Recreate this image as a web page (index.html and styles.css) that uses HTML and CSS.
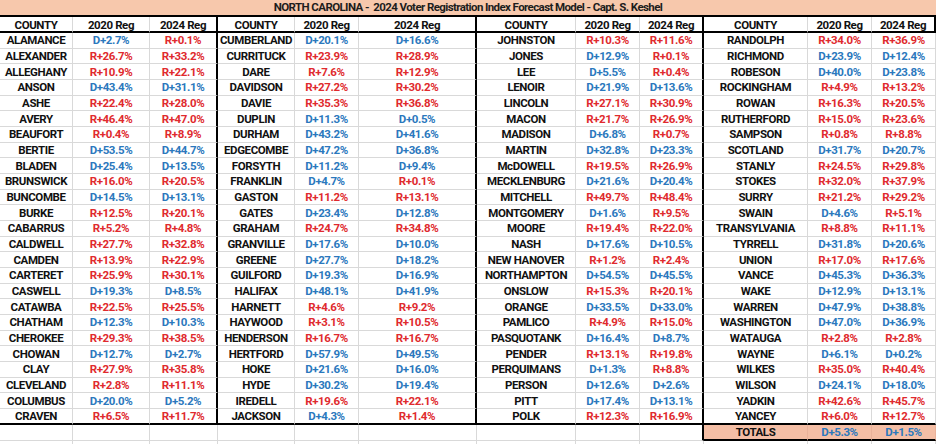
FILE: index.html
```html
<!DOCTYPE html>
<html lang="en">
<head>
<meta charset="utf-8">
<title>NC 2024 Voter Registration Index Forecast Model</title>
<link rel="stylesheet" href="styles.css">
</head>
<body>
<div class="sheet">
  <div class="title">NORTH CAROLINA -&nbsp; 2024 Voter Registration Index Forecast Model - Capt. S. Keshel</div>
  <div class="grid head">
    <div>COUNTY</div><div>2020 Reg</div><div>2024 Reg</div>
    <div>COUNTY</div><div>2020 Reg</div><div>2024 Reg</div>
    <div>COUNTY</div><div>2020 Reg</div><div>2024 Reg</div>
    <div>COUNTY</div><div>2020 Reg</div><div>2024 Reg</div>
  </div>
  <div class="grid body">
    <div class="n">ALAMANCE</div><div class="d">D+2.7%</div><div class="r">R+0.1%</div>
    <div class="n">CUMBERLAND</div><div class="d">D+20.1%</div><div class="d">D+16.6%</div>
    <div class="n">JOHNSTON</div><div class="r">R+10.3%</div><div class="r">R+11.6%</div>
    <div class="n">RANDOLPH</div><div class="r">R+34.0%</div><div class="r">R+36.9%</div>

    <div class="n">ALEXANDER</div><div class="r">R+26.7%</div><div class="r">R+33.2%</div>
    <div class="n">CURRITUCK</div><div class="r">R+23.9%</div><div class="r">R+28.9%</div>
    <div class="n">JONES</div><div class="d">D+12.9%</div><div class="r">R+0.1%</div>
    <div class="n">RICHMOND</div><div class="d">D+23.9%</div><div class="d">D+12.4%</div>

    <div class="n">ALLEGHANY</div><div class="r">R+10.9%</div><div class="r">R+22.1%</div>
    <div class="n">DARE</div><div class="r">R+7.6%</div><div class="r">R+12.9%</div>
    <div class="n">LEE</div><div class="d">D+5.5%</div><div class="r">R+0.4%</div>
    <div class="n">ROBESON</div><div class="d">D+40.0%</div><div class="d">D+23.8%</div>

    <div class="n">ANSON</div><div class="d">D+43.4%</div><div class="d">D+31.1%</div>
    <div class="n">DAVIDSON</div><div class="r">R+27.2%</div><div class="r">R+30.2%</div>
    <div class="n">LENOIR</div><div class="d">D+21.9%</div><div class="d">D+13.6%</div>
    <div class="n">ROCKINGHAM</div><div class="r">R+4.9%</div><div class="r">R+13.2%</div>

    <div class="n">ASHE</div><div class="r">R+22.4%</div><div class="r">R+28.0%</div>
    <div class="n">DAVIE</div><div class="r">R+35.3%</div><div class="r">R+36.8%</div>
    <div class="n">LINCOLN</div><div class="r">R+27.1%</div><div class="r">R+30.9%</div>
    <div class="n">ROWAN</div><div class="r">R+16.3%</div><div class="r">R+20.5%</div>

    <div class="n">AVERY</div><div class="r">R+46.4%</div><div class="r">R+47.0%</div>
    <div class="n">DUPLIN</div><div class="d">D+11.3%</div><div class="d">D+0.5%</div>
    <div class="n">MACON</div><div class="r">R+21.7%</div><div class="r">R+26.9%</div>
    <div class="n">RUTHERFORD</div><div class="r">R+15.0%</div><div class="r">R+23.6%</div>

    <div class="n">BEAUFORT</div><div class="r">R+0.4%</div><div class="r">R+8.9%</div>
    <div class="n">DURHAM</div><div class="d">D+43.2%</div><div class="d">D+41.6%</div>
    <div class="n">MADISON</div><div class="d">D+6.8%</div><div class="r">R+0.7%</div>
    <div class="n">SAMPSON</div><div class="r">R+0.8%</div><div class="r">R+8.8%</div>

    <div class="n">BERTIE</div><div class="d">D+53.5%</div><div class="d">D+44.7%</div>
    <div class="n">EDGECOMBE</div><div class="d">D+47.2%</div><div class="d">D+36.8%</div>
    <div class="n">MARTIN</div><div class="d">D+32.8%</div><div class="d">D+23.3%</div>
    <div class="n">SCOTLAND</div><div class="d">D+31.7%</div><div class="d">D+20.7%</div>

    <div class="n">BLADEN</div><div class="d">D+25.4%</div><div class="d">D+13.5%</div>
    <div class="n">FORSYTH</div><div class="d">D+11.2%</div><div class="d">D+9.4%</div>
    <div class="n">McDOWELL</div><div class="r">R+19.5%</div><div class="r">R+26.9%</div>
    <div class="n">STANLY</div><div class="r">R+24.5%</div><div class="r">R+29.8%</div>

    <div class="n">BRUNSWICK</div><div class="r">R+16.0%</div><div class="r">R+20.5%</div>
    <div class="n">FRANKLIN</div><div class="d">D+4.7%</div><div class="r">R+0.1%</div>
    <div class="n">MECKLENBURG</div><div class="d">D+21.6%</div><div class="d">D+20.4%</div>
    <div class="n">STOKES</div><div class="r">R+32.0%</div><div class="r">R+37.9%</div>

    <div class="n">BUNCOMBE</div><div class="d">D+14.5%</div><div class="d">D+13.1%</div>
    <div class="n">GASTON</div><div class="r">R+11.2%</div><div class="r">R+13.1%</div>
    <div class="n">MITCHELL</div><div class="r">R+49.7%</div><div class="r">R+48.4%</div>
    <div class="n">SURRY</div><div class="r">R+21.2%</div><div class="r">R+29.2%</div>

    <div class="n">BURKE</div><div class="r">R+12.5%</div><div class="r">R+20.1%</div>
    <div class="n">GATES</div><div class="d">D+23.4%</div><div class="d">D+12.8%</div>
    <div class="n">MONTGOMERY</div><div class="d">D+1.6%</div><div class="r">R+9.5%</div>
    <div class="n">SWAIN</div><div class="d">D+4.6%</div><div class="r">R+5.1%</div>

    <div class="n">CABARRUS</div><div class="r">R+5.2%</div><div class="r">R+4.8%</div>
    <div class="n">GRAHAM</div><div class="r">R+24.7%</div><div class="r">R+34.8%</div>
    <div class="n">MOORE</div><div class="r">R+19.4%</div><div class="r">R+22.0%</div>
    <div class="n">TRANSYLVANIA</div><div class="r">R+8.8%</div><div class="r">R+11.1%</div>

    <div class="n">CALDWELL</div><div class="r">R+27.7%</div><div class="r">R+32.8%</div>
    <div class="n">GRANVILLE</div><div class="d">D+17.6%</div><div class="d">D+10.0%</div>
    <div class="n">NASH</div><div class="d">D+17.6%</div><div class="d">D+10.5%</div>
    <div class="n">TYRRELL</div><div class="d">D+31.8%</div><div class="d">D+20.6%</div>

    <div class="n">CAMDEN</div><div class="r">R+13.9%</div><div class="r">R+22.9%</div>
    <div class="n">GREENE</div><div class="d">D+27.7%</div><div class="d">D+18.2%</div>
    <div class="n">NEW HANOVER</div><div class="r">R+1.2%</div><div class="r">R+2.4%</div>
    <div class="n">UNION</div><div class="r">R+17.0%</div><div class="r">R+17.6%</div>

    <div class="n">CARTERET</div><div class="r">R+25.9%</div><div class="r">R+30.1%</div>
    <div class="n">GUILFORD</div><div class="d">D+19.3%</div><div class="d">D+16.9%</div>
    <div class="n">NORTHAMPTON</div><div class="d">D+54.5%</div><div class="d">D+45.5%</div>
    <div class="n">VANCE</div><div class="d">D+45.3%</div><div class="d">D+36.3%</div>

    <div class="n">CASWELL</div><div class="d">D+19.3%</div><div class="d">D+8.5%</div>
    <div class="n">HALIFAX</div><div class="d">D+48.1%</div><div class="d">D+41.9%</div>
    <div class="n">ONSLOW</div><div class="r">R+15.3%</div><div class="r">R+20.1%</div>
    <div class="n">WAKE</div><div class="d">D+12.9%</div><div class="d">D+13.1%</div>

    <div class="n">CATAWBA</div><div class="r">R+22.5%</div><div class="r">R+25.5%</div>
    <div class="n">HARNETT</div><div class="r">R+4.6%</div><div class="r">R+9.2%</div>
    <div class="n">ORANGE</div><div class="d">D+33.5%</div><div class="d">D+33.0%</div>
    <div class="n">WARREN</div><div class="d">D+47.9%</div><div class="d">D+38.8%</div>

    <div class="n">CHATHAM</div><div class="d">D+12.3%</div><div class="d">D+10.3%</div>
    <div class="n">HAYWOOD</div><div class="r">R+3.1%</div><div class="r">R+10.5%</div>
    <div class="n">PAMLICO</div><div class="r">R+4.9%</div><div class="r">R+15.0%</div>
    <div class="n">WASHINGTON</div><div class="d">D+47.0%</div><div class="d">D+36.9%</div>

    <div class="n">CHEROKEE</div><div class="r">R+29.3%</div><div class="r">R+38.5%</div>
    <div class="n">HENDERSON</div><div class="r">R+16.7%</div><div class="r">R+16.7%</div>
    <div class="n">PASQUOTANK</div><div class="d">D+16.4%</div><div class="d">D+8.7%</div>
    <div class="n">WATAUGA</div><div class="r">R+2.8%</div><div class="r">R+2.8%</div>

    <div class="n">CHOWAN</div><div class="d">D+12.7%</div><div class="d">D+2.7%</div>
    <div class="n">HERTFORD</div><div class="d">D+57.9%</div><div class="d">D+49.5%</div>
    <div class="n">PENDER</div><div class="r">R+13.1%</div><div class="r">R+19.8%</div>
    <div class="n">WAYNE</div><div class="d">D+6.1%</div><div class="d">D+0.2%</div>

    <div class="n">CLAY</div><div class="r">R+27.9%</div><div class="r">R+35.8%</div>
    <div class="n">HOKE</div><div class="d">D+21.6%</div><div class="d">D+16.0%</div>
    <div class="n">PERQUIMANS</div><div class="d">D+1.3%</div><div class="r">R+8.8%</div>
    <div class="n">WILKES</div><div class="r">R+35.0%</div><div class="r">R+40.4%</div>

    <div class="n">CLEVELAND</div><div class="r">R+2.8%</div><div class="r">R+11.1%</div>
    <div class="n">HYDE</div><div class="d">D+30.2%</div><div class="d">D+19.4%</div>
    <div class="n">PERSON</div><div class="d">D+12.6%</div><div class="d">D+2.6%</div>
    <div class="n">WILSON</div><div class="d">D+24.1%</div><div class="d">D+18.0%</div>

    <div class="n">COLUMBUS</div><div class="d">D+20.0%</div><div class="d">D+5.2%</div>
    <div class="n">IREDELL</div><div class="r">R+19.6%</div><div class="r">R+22.1%</div>
    <div class="n">PITT</div><div class="d">D+17.4%</div><div class="d">D+13.1%</div>
    <div class="n">YADKIN</div><div class="r">R+42.6%</div><div class="r">R+45.7%</div>

    <div class="n">CRAVEN</div><div class="r">R+6.5%</div><div class="r">R+11.7%</div>
    <div class="n">JACKSON</div><div class="d">D+4.3%</div><div class="r">R+1.4%</div>
    <div class="n">POLK</div><div class="r">R+12.3%</div><div class="r">R+16.9%</div>
    <div class="n">YANCEY</div><div class="r">R+6.0%</div><div class="r">R+12.7%</div>
  </div>
  <div class="grid foot">
    <div></div><div></div><div></div>
    <div></div><div></div><div></div>
    <div></div><div></div><div class="edge"></div>
    <div class="tot n">TOTALS</div><div class="tot d">D+5.3%</div><div class="tot d">D+1.5%</div>

    <div></div><div></div><div></div>
    <div></div><div></div><div></div>
    <div></div><div></div><div></div>
    <div></div><div></div><div></div>
  </div>
</div>
</body>
</html>
```

FILE: styles.css
```css
html, body {
  margin: 0;
  padding: 0;
  background: #ffffff;
  overflow: hidden;
}

.sheet {
  width: 936px;
  font-family: Roboto, "Liberation Sans", Arial, sans-serif;
  font-weight: 700;
  color: #111111;
}

.title {
  height: 15px;
  line-height: 15px;
  background: #f7c8ac;
  border-bottom: 2px solid #000000;
  text-align: center;
  font-size: 11.5px;
  letter-spacing: -0.6px;
  color: #1d1d1d;
  white-space: nowrap;
}

.grid {
  display: grid;
  grid-template-columns: 73px 77px 68px 77px 64px 118px 99px 64px 64px 104px 64px 64px;
}

.grid > div {
  box-sizing: border-box;
  border-right: 1px solid #d9d9d9;
  border-bottom: 1px solid #d9d9d9;
  display: flex;
  align-items: center;
  justify-content: center;
  font-size: 11.5px;
  letter-spacing: -0.4px;
  white-space: nowrap;
  overflow: hidden;
}

.head {
  grid-auto-rows: 16px;
}

.head > div {
  border-bottom: 2px solid #000000;
  color: #111111;
  padding-top: 1px;
}

.head > div:nth-child(3n) {
  border-right: 2px solid #000000;
}

.body {
  grid-auto-rows: 15.68px;
}

.body > div:nth-child(12n+3),
.body > div:nth-child(12n+6),
.body > div:nth-child(12n+9) {
  border-right: 2px solid #000000;
}

.body > div:nth-last-child(-n+12) {
  border-bottom: 2px solid #000000;
}

.foot {
  grid-auto-rows: 16px;
}

.foot > div.edge {
  border-right: 2px solid #000000;
}

.foot > div.tot {
  background: #f4bea5;
  border-bottom: 2px solid #000000;
  border-right-color: #e9b29a;
}

.n {
  color: #111111;
  letter-spacing: -0.45px;
}

.r { color: #e02a2e; }
.d { color: #2b78bd; }
```
